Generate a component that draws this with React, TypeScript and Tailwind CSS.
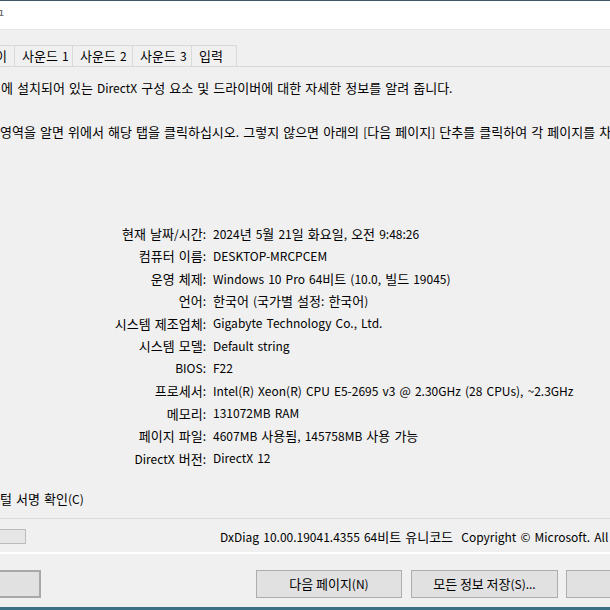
import { Fragment } from 'react';

const rows: [string, string][] = [
  ['현재 날짜/시간:', '2024년 5월 21일 화요일, 오전 9:48:26'],
  ['컴퓨터 이름:', 'DESKTOP-MRCPCEM'],
  ['운영 체제:', 'Windows 10 Pro 64비트 (10.0, 빌드 19045)'],
  ['언어:', '한국어 (국가별 설정: 한국어)'],
  ['시스템 제조업체:', 'Gigabyte Technology Co., Ltd.'],
  ['시스템 모델:', 'Default string'],
  ['BIOS:', 'F22'],
  ['프로세서:', 'Intel(R) Xeon(R) CPU E5-2695 v3 @ 2.30GHz (28 CPUs), ~2.3GHz'],
  ['메모리:', '131072MB RAM'],
  ['페이지 파일:', '4607MB 사용됨, 145758MB 사용 가능'],
  ['DirectX 버전:', 'DirectX 12'],
];

const tabs: { label: string; w: string }[] = [
  { label: '사운드 1', w: 'w-[58px]' },
  { label: '사운드 2', w: 'w-[60px]' },
  { label: '사운드 3', w: 'w-[59px]' },
  { label: '입력', w: 'w-[45px]' },
];

// Hangul in the original font runs wider than its Latin, so set Hangul runs a bit larger
function K({ t }: { t: string }) {
  return (
    <span>
      {t.split(/([\uAC00-\uD7A3]+)/).map((s, i) =>
        i % 2 ? <span key={i} className="text-[13px]">{s}</span> : <Fragment key={i}>{s}</Fragment>
      )}
    </span>
  );
}

export default function App() {
  return (
    <div className="w-[610px] h-[610px] overflow-hidden bg-[#f0f0f0] text-black text-[12px] [word-spacing:1.4px] font-['Noto_Sans_CJK_KR',sans-serif] flex flex-col whitespace-nowrap">
      {/* title bar */}
      <div className="h-px bg-[#3d5566]" />
      <div className="h-[28px] bg-white flex items-center overflow-hidden">
        <span className="-ml-[7px] text-[#555] text-[12px] leading-none">구</span>
      </div>
      <div className="h-px bg-[#e8e8e8]" />

      {/* tabs */}
      <div className="h-[15px]" />
      <div className="h-[22px] flex border-b border-[#d9d9d9]">
        <div className="w-[15px] shrink-0 border-t border-r border-[#d9d9d9] flex items-center justify-end pr-[7px] overflow-hidden">
          <K t="이" />
        </div>
        {tabs.map((t) => (
          <div key={t.label} className={`${t.w} shrink-0 border-t border-r border-[#d9d9d9] flex items-center pl-[7px]`}>
            <K t={t.label} />
          </div>
        ))}
      </div>

      {/* description */}
      <p className="mt-[13px] h-[16px] leading-[16px] pl-px">
        <K t="에 설치되어 있는 DirectX 구성 요소 및 드라이버에 대한 자세한 정보를 알려 줍니다." />
      </p>
      <p className="mt-[28px] h-[16px] leading-[16px]">
        <K t="영역을 알면 위에서 해당 탭을 클릭하십시오. 그렇지 않으면 아래의 [다음 페이지] 단추를 클릭하여 각 페이지를 차례로 보십시오." />
      </p>

      {/* system info */}
      <div className="mt-[82px] flex flex-col">
        {rows.map(([k, v]) => (
          <div key={k} className="h-[22.5px] flex items-center">
            <span className="w-[206px] shrink-0 text-right"><K t={k} /></span>
            <span className="ml-[7px]"><K t={v} /></span>
          </div>
        ))}
      </div>

      <p className="mt-[21.5px] h-[16px] leading-[16px]"><K t="털 서명 확인(C)" /></p>

      <div className="mt-[11px] h-px bg-[#dadada]" />

      {/* status */}
      <div className="mt-[10px] h-[15px] flex items-center">
        <div className="w-[26px] h-[15px] shrink-0 bg-[#e6e6e6] border-y border-r border-[#bcbcbc]" />
        <span className="ml-[194px] whitespace-pre">
          <K t="DxDiag 10.00.19041.4355 64비트 유니코드  Copyright © Microsoft. All rights reserved." />
        </span>
      </div>

      <div className="mt-[8px] h-[2px] bg-white" />

      {/* buttons */}
      <div className="mt-[16px] h-[28px] flex">
        <button className="w-[41px] h-[28px] shrink-0 bg-[#e1e1e1] border-y-2 border-r-2 border-[#a8a8a8]" />
        <button className="ml-[215px] w-[146px] h-[28px] shrink-0 bg-[#e1e1e1] border border-[#adadad]">
          <K t="다음 페이지(N)" />
        </button>
        <button className="ml-[9px] w-[147px] h-[28px] shrink-0 bg-[#e1e1e1] border border-[#adadad]">
          <K t="모든 정보 저장(S)..." />
        </button>
        <button className="ml-[8px] w-[60px] h-[28px] shrink-0 bg-[#e1e1e1] border border-[#adadad]" />
      </div>

      <div className="mt-[9px] h-[3px] bg-[#3b7184]" />
    </div>
  );
}
